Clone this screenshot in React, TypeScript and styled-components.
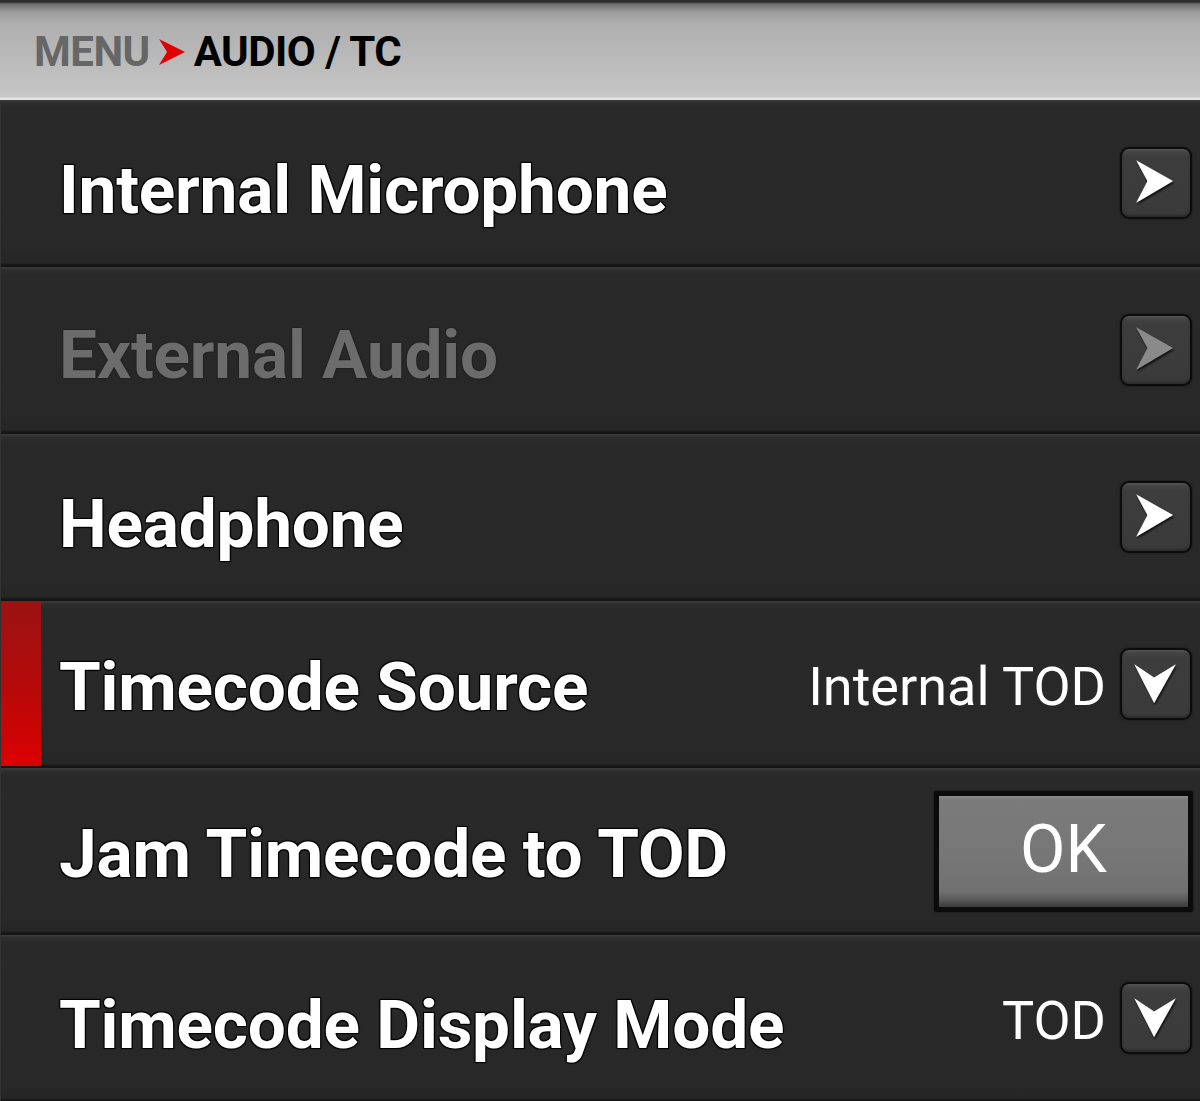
import React from "react";
import styled, { createGlobalStyle } from "styled-components";

const Global = createGlobalStyle`
  html, body { margin: 0; padding: 0; background: #282828; }
  body { width: 1200px; height: 1101px; overflow: hidden; font-family: Roboto, "Liberation Sans", sans-serif; }
`;

const Screen = styled.div`
  width: 1200px;
  display: flex;
  flex-direction: column;
  background: #282828;
`;

const Header = styled.header`
  height: 100px;
  box-sizing: border-box;
  display: flex;
  align-items: center;
  padding: 4px 0 0 34px;
  gap: 8px;
  background: linear-gradient(
    to bottom,
    #2e2e2e 0px,
    #2e2e2e 2px,
    #6e6e6e 4px,
    #9c9c9c 12px,
    #afafaf 24px,
    #c4c4c4 92px,
    #c8c8c8 97px,
    #e4e4e4 98px,
    #e4e4e4 100px
  );
`;

const Crumb = styled.span<{ $current?: boolean }>`
  font-family: Roboto, "Liberation Sans", sans-serif;
  font-weight: 700;
  font-size: 42px;
  letter-spacing: -0.5px;
  line-height: 1;
  color: ${(p) => (p.$current ? "#000" : "#666")};
`;

const List = styled.div`
  display: flex;
  flex-direction: column;
`;

const Row = styled.div`
  position: relative;
  height: 167px;
  box-sizing: border-box;
  display: flex;
  align-items: center;
  padding: 4px 8px 0 58px;
  background: linear-gradient(
    to bottom,
    #3c3c3c 0px,
    #2e2e2e 3px,
    #292929 8px,
    #282828 150px,
    #262626 163px,
    #151515 165px,
    #151515 167px
  );
  border-left: 1px solid #333;
`;

const Marker = styled.div`
  position: absolute;
  left: 0;
  top: 0;
  bottom: 2px;
  width: 40px;
  background: linear-gradient(to bottom, #9b1212 0%, #b40a0a 50%, #dc0000 100%);
`;

const Title = styled.span<{ $disabled?: boolean; $shift: number }>`
  flex: 1;
  padding-top: ${(p) => p.$shift * 2}px;
  font-family: Roboto, "Liberation Sans", sans-serif;
  font-weight: 700;
  font-size: 67.5px;
  letter-spacing: -0.2px;
  color: ${(p) => (p.$disabled ? "#6c6c6c" : "#ffffff")};
  text-shadow: ${(p) =>
    p.$disabled
      ? "0 0 2px rgba(0,0,0,0.6)"
      : "0 0 1px #000, 1px 1px 1px #000, -1px -1px 1px #000, 1px -1px 1px #000, -1px 1px 1px #000"};
  white-space: nowrap;
`;

const Value = styled.span`
  font-family: Roboto, "Liberation Sans", sans-serif;
  font-weight: 400;
  font-size: 54px;
  color: #ffffff;
  margin-right: 14px;
  white-space: nowrap;
`;

const IconBox = styled.div`
  width: 72px;
  height: 72px;
  box-sizing: border-box;
  border-radius: 9px;
  border: 2px solid #0c0c0c;
  background: linear-gradient(to bottom, #555 0px, #444 3px, #3d3d3d 8px, #3a3a3a 100%);
  box-shadow: 0 0 2px rgba(0, 0, 0, 0.6), inset 0 -2px 2px rgba(0, 0, 0, 0.25);
  display: flex;
  align-items: center;
  justify-content: center;
  margin-top: -6px;
  flex-shrink: 0;
`;

const OkButton = styled.button`
  width: 259px;
  height: 121px;
  box-sizing: border-box;
  border: 5px solid #0b0b0b;
  border-radius: 2px;
  background: linear-gradient(
    to bottom,
    #8a8a8a 0px,
    #7b7b7b 4px,
    #777 50%,
    #717171 86%,
    #5a5a5a 93%,
    #3a3a3a 100%
  );
  box-shadow: 0 0 2px rgba(0, 0, 0, 0.7);
  color: #fff;
  font-family: Roboto, "Liberation Sans", sans-serif;
  font-weight: 400;
  font-size: 66px;
  line-height: 1;
  padding: 0 0 4px 0;
  margin-right: -1px;
  margin-top: -4px;
  cursor: pointer;
`;

const RightArrow = ({ disabled }: { disabled?: boolean }) => (
  <svg width="72" height="72" viewBox="0 0 72 72">
    <defs>
      <filter id={disabled ? "shD" : "shR"} x="-30%" y="-30%" width="160%" height="160%">
        <feDropShadow dx="1" dy="2" stdDeviation="1.2" floodColor="#000" floodOpacity="0.8" />
      </filter>
    </defs>
    <polygon
      points="15,12 54,34 15,57 27,34"
      fill={disabled ? "#8a8a8a" : "#ffffff"}
      filter={`url(#${disabled ? "shD" : "shR"})`}
    />
  </svg>
);

const DownArrow = () => (
  <svg width="72" height="72" viewBox="0 0 72 72">
    <defs>
      <filter id="shDown" x="-30%" y="-30%" width="160%" height="160%">
        <feDropShadow dx="1" dy="2" stdDeviation="1.2" floodColor="#000" floodOpacity="0.8" />
      </filter>
    </defs>
    <polygon points="13,15 34,29 57,15 34,56" fill="#ffffff" filter="url(#shDown)" />
  </svg>
);

const Chevron = () => (
  <svg width="28" height="28" viewBox="0 0 28 28">
    <polygon points="1,1 27,14 1,27 9,14" fill="#e00000" />
  </svg>
);

type Item = {
  label: string;
  kind: "nav" | "select" | "ok";
  value?: string;
  disabled?: boolean;
  selected?: boolean;
  shift: number;
};

const items: Item[] = [
  { label: "Internal Microphone", kind: "nav", shift: 3.5 },
  { label: "External Audio", kind: "nav", disabled: true, shift: 1.5 },
  { label: "Headphone", kind: "nav", shift: 3.5 },
  { label: "Timecode Source", kind: "select", value: "Internal TOD", selected: true, shift: 0 },
  { label: "Jam Timecode to TOD", kind: "ok", shift: 0 },
  { label: "Timecode Display Mode", kind: "select", value: "TOD", shift: 3.5 },
];

export default function App() {
  return (
    <Screen>
      <Global />
      <Header>
        <Crumb>MENU</Crumb>
        <Chevron />
        <Crumb $current>AUDIO / TC</Crumb>
      </Header>
      <List>
        {items.map((it) => (
          <Row key={it.label}>
            {it.selected && <Marker />}
            <Title $disabled={it.disabled} $shift={it.shift}>
              {it.label}
            </Title>
            {it.kind === "nav" && (
              <IconBox>
                <RightArrow disabled={it.disabled} />
              </IconBox>
            )}
            {it.kind === "select" && (
              <>
                <Value>{it.value}</Value>
                <IconBox>
                  <DownArrow />
                </IconBox>
              </>
            )}
            {it.kind === "ok" && <OkButton>OK</OkButton>}
          </Row>
        ))}
      </List>
    </Screen>
  );
}
